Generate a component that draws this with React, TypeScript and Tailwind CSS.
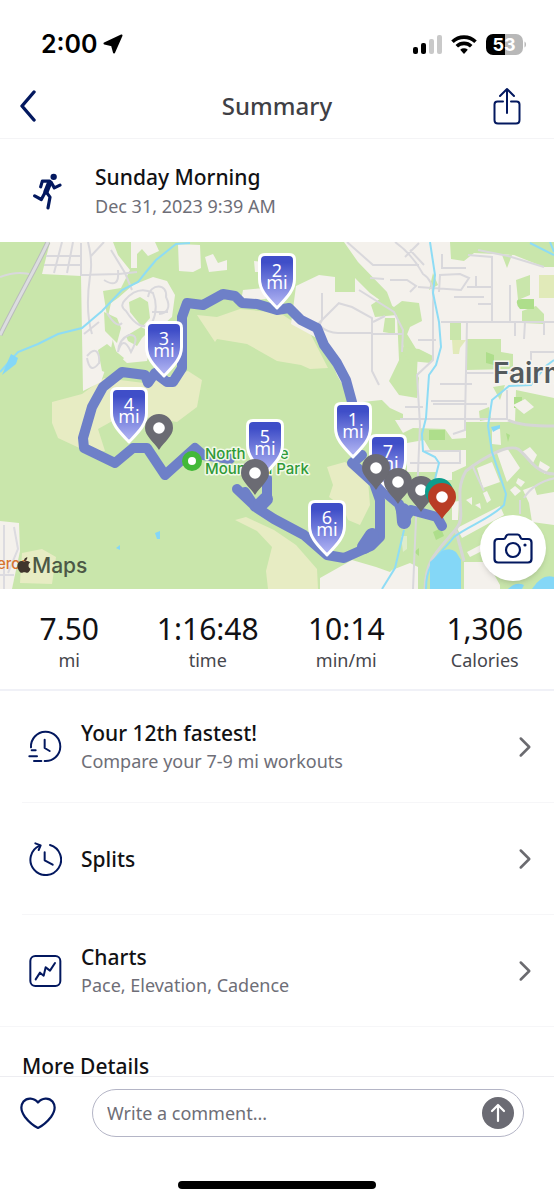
import React, { useState } from 'react';
import { ChevronRight } from 'lucide-react';
import { FaApple } from 'react-icons/fa';

interface MapPoint {
  label: string;
  x: number;
  y: number;
}

// Later entries are painted over earlier ones
const MILE_MARKERS: MapPoint[] = [
  { label: '7', x: 388, y: 434 },
  { label: '6', x: 327, y: 500 },
  { label: '5', x: 265, y: 419 },
  { label: '4', x: 129, y: 387 },
  { label: '3', x: 164, y: 321 },
  { label: '2', x: 277, y: 253 },
  { label: '1', x: 353, y: 402 },
];

const PINS = [
  { x: 159, y: 428, color: '#6b6b73' },
  { x: 255, y: 473, color: '#6b6b73' },
  { x: 421, y: 490, color: '#6b6b73' },
  { x: 398, y: 482, color: '#6b6b73' },
  { x: 376, y: 468, color: '#6b6b73' },
  { x: 439, y: 492, color: '#0d9c8c' },
  { x: 442, y: 497, color: '#b93d25' },
];

const STATS = [
  { value: '7.50', unit: 'mi' },
  { value: '1:16:48', unit: 'time' },
  { value: '10:14', unit: 'min/mi' },
  { value: '1,306', unit: 'Calories' },
];

const FastestIcon = () => (
  <svg viewBox="0 0 102 102" className="size-[34px]" fill="none" stroke="currentColor" strokeWidth="6" strokeLinecap="round" strokeLinejoin="round">
    <path d="M9 52A44 44 0 1 1 50 93" />
    <path d="M50 29v25l15 9M11 61h12M4 79h23M18 93h22" />
  </svg>
);

const SplitsIcon = () => (
  <svg viewBox="0 0 102 102" className="size-[34px]" fill="none" stroke="currentColor" strokeWidth="6" strokeLinecap="round" strokeLinejoin="round">
    <path d="M66 9A46 46 0 1 1 35 11" />
    <path d="M22 4l16 6-6 14M50 31v24l24 13" />
  </svg>
);

const ChartsIcon = () => (
  <svg viewBox="-1 0 102 102" className="size-[34px]" fill="none" stroke="currentColor" strokeWidth="6" strokeLinecap="round" strokeLinejoin="round">
    <rect x="6" y="6" width="90" height="90" rx="15" />
    <path d="M22 76l13-20 11 9 6-25 13 10 15-23" />
  </svg>
);

const ROWS = [
  { title: 'Your 12th fastest!', subtitle: 'Compare your 7-9 mi workouts', icon: <FastestIcon /> },
  { title: 'Splits', subtitle: '', icon: <SplitsIcon /> },
  { title: 'Charts', subtitle: 'Pace, Elevation, Cadence', icon: <ChartsIcon /> },
];

const StatusBar = () => (
  <div className="flex items-center justify-between pl-[41px] pr-[28px] pt-7">
    <div className="flex items-center gap-[5px]">
      <span className="font-['Inter'] text-[25px] leading-8 font-semibold text-black">2:00</span>
      <svg viewBox="0 0 20 20" className="size-5" fill="#000" stroke="#000" strokeWidth="2" strokeLinejoin="round">
        <path d="M18.500 1.500L1.500 9.500l7.500 1.700 2 7.300z" />
      </svg>
    </div>
    <div className="flex items-center gap-[9px]">
      <svg viewBox="0 0 30 19" className="h-[19px] w-[30px]">
        <rect x="1" y="12" width="5" height="7" rx="2" />
        <rect x="9" y="8" width="5" height="11" rx="2" />
        <rect x="17" y="4" width="5" height="15" rx="2" fill="#c9c9c9" />
        <rect x="25" y="0" width="5" height="19" rx="2" fill="#c9c9c9" />
      </svg>
      <svg viewBox="0 0 26 19" className="h-[19px] w-[26px]" fill="none" stroke="#000" strokeWidth="3.600">
        <path d="M1.500 6.800a16.500 16.500 0 0 1 23 0" />
        <path d="M5.800 11.300a10.300 10.300 0 0 1 14.400 0" />
        <path d="M13 19l-3.800-4.200a5.600 5.600 0 0 1 7.600 0z" fill="#000" stroke="none" />
      </svg>
      <svg viewBox="0 0 40 21" className="h-[21px] w-10">
        <path d="M7 0h12v21H7a7 7 0 0 1-7-7V7a7 7 0 0 1 7-7z" />
        <path d="M19 0h11a7 7 0 0 1 7 7v7a7 7 0 0 1-7 7H19z" fill="#b8b8b8" />
        <path d="M38.500 7.500c2 1 2 5 0 6z" fill="#b8b8b8" />
        <text x="18" y="17" textAnchor="middle" fill="#fff" className="font-['Inter'] text-[18px] font-bold">53</text>
      </svg>
    </div>
  </div>
);

const MileMarker = ({ label, x, y }: MapPoint) => (
  <g transform={`translate(${x} ${y})`}>
    <path
      d="M-12 1.500h24q5.500 0 5.500 5.500v19c0 12-9 20-17.500 29-8.500-9-17.500-17-17.500-29V7q0-5.500 5.500-5.500z"
      fill="url(#marker)"
      stroke="#fff"
      strokeWidth="3"
      strokeLinejoin="round"
    />
    <text y="24" textAnchor="middle" fill="#fff" className="text-[18px]">{label}</text>
    <text y="36" textAnchor="middle" fill="#fff" className="text-[18px]">mi</text>
  </g>
);

const RouteMap = () => (
  <svg viewBox="0 242 554 347" className="block w-full" role="img" aria-label="Route map">
    <defs>
      <linearGradient id="marker" x1="0" y1="0" x2="0" y2="1">
        <stop offset="0.150" stopColor="#3f4ec8" />
        <stop offset="0.900" stopColor="#a9adf0" />
      </linearGradient>
    </defs>
    <rect y="242" width="554" height="347" fill="#c9e6ab" />

    {/* Meadows */}
    <g fill="#e7ecc3">
      <path d="M52 402l30-8 22-16 40 5 44-12 14 9-5 27-20 15-52-8-27 15 7 22-17 1-30-14-6-15z" />
      <path d="M197 315l20 2 23-8 40 4 30 20 18 35-18 1-9-4-24-4-30-17-30-5-2 3z" />
      <path d="M327 467l18-5 23 18 2 25-10 20-12-5-5-13-14-10 4-12z" />
      <path d="M235 520l11-3 28 13 22 15 21 24 1 20h-50l-2-18 6-24-15-16z" />
      <path d="M22 553l20-4 14 8-4 27-32-1z" />
    </g>

    {/* Built-up areas */}
    <g fill="#f4f1ec">
      <path d="M50 242h63l5 13 12 15-9 18-18 3 4 25 7 18-5 24-8 24-18 9-2-115-39-2z" />
      <path d="M118 298l15-13 20-8 14 4 8 14-3 22-14 12-7 14-4 18-20 2-10-9-10-33 4-18z" />
      <path d="M131 242h24l4 9-11 5-6-7-5 5v14h-6zM178 244l22 1 1 23-8 4-14-1zM205 257l8-3 5 9 9-3v10l-18 2zM243 290l20-2 3 11-25 2zM254 261l10 1v10h-9z" />
      <path d="M0 521l19 2 1 28-8 38H0z" />
      <path d="M344 242h210v180H403v-8l-13-6-9-9 15-7 20-2 2-38-22-36-9-24-29-30z" />
      <path d="M296 286l23-11 16 2v15h20v-14l15 15 21 15 11 16 2 36 2 25-15 14-38 4-16-28-13-33-33-18z" />
    </g>

    {/* Green patches inside the town */}
    <g fill="#c9e6ab">
      <path d="M129 302l11-5 8 5 2 16-8 9-12-15zM104 312l13 6 4 10-4 15-12-12zM126 336l15-9 8 4-7 7-5 8-9-5zM98 350l9-6 17 14-14 16-8-3z" />
      <path d="M371 305l9-6 14 8 8-6 17 2 3 18-12 6-8 20 17 2 14 7-2 7-32-3-2-45-22 2zM385 318h10v16l-12-2z" />
      <path d="M450 242h104v25h-10l-30-12-40-2-10 8-13-2zM502 255h10l-5 13zM516 280l14-5v20l-12 5zM450 323h11v17h-11zM467 339h34v13l12 2v15l-46 1zM516 390l38 8v24h-39zM493 387l12-2-5 15zM479 411l10-4 2 12-11 2z" />
      <path d="M522 311l14-5 8 8v10l-22-1zM433 273l5 12-9 5zM403 352l8 12 8 14-2 20-18-3-10-14z" />
    </g>
    <g fill="#e1eab9">
      <path d="M539 275h15v23h-15zM452 340h14l-6 8-1 6h-6z" />
    </g>
    <path d="M517 301q0-2 5-2h12v10h-14q-4-4-3-8zM429 430h16v10h-16zM486 352l8 3v10l-8-2zM514 397h8v11h-8zM506 433l4 2-2 7zM433 532l8-4 3 8-8 4zM414 552l5-4v8z" fill="#aede8b" />

    {/* Blocks east of the creek */}
    <g fill="#f4f1ec">
      <path d="M395 420h71v18l-14 1-7-10-32-1-10 5zM407 443l17-3 6 10h36v16l-13 6h-46zM513 405l12-6 9 8-10 7z" />
      <path d="M477 468l15-6 8 20-17 6zM497 453l10-5 13 20-13 14zM492 430l8-1 1 16-9-1zM522 452l8-5 7 8-5 10zM540 461l10 6-5 7-7-5zM518 478l7 4-4 5-5-4zM510 490l5-4 6 5-6 5zM466 500l6-3v8zM475 505l5-2 1 6zM483 493l4-2 4 9-4 3z" />
      <path d="M457 528l43-22 4 9-42 23zM467 552l23-12v7l-20 10zM523 490l11-4 3 9 17-3v33l-22-3-3-19zM464 562h23l13 23v4h-36zM452 502l7-1-1 19h-6zM436 472h16v8h-16z" />
      <path d="M320 578l32-18 24 7 14 5 2-2 18-7 8 4v22h-98z" />
      <path d="M403 552l4-3v-13h-6z" opacity="0.500" />
    </g>

    {/* Roads */}
    <g fill="none" stroke="#d9d8dc" strokeWidth="2">
      <path d="M0 277q18-7 33-2M62 242l-8 31M73 242l-6 31M46 256h35M44 265h38M81 243v32l38-1 18-2M88 242q5 20 2 34-5 35 2 58M104 242l-13 14M111 250l14 23 7 17M125 300q13-15 28-7 6 15-1 30-12 10-26-12-7-5-1-11" />
      <path d="M148 297c2-14 20-14 18 0 6 12 0 16-7 17M152 312h16M104 280q16 10 14-10M84 334l15-12M87 356c10-12 13-1 12 8M87 358q3 17 12 5M118 352q5-18 13 0 10-18-2-17-10 4-11 17M107 313q10 16 15 10" />
      <path d="M347 242l26 23h46M395 242q17 12 28 32 12 7 10 29v57l-16 15 3 50-7 164M405 257l14-14M410 250l14 15M390 280h17l9 6-6 6M418 287l43 3 8-12-9-4-20 1-1 17M442 254v14h24M454 297h30" />
      <path d="M338 303l14 4 20 11v53l7 14M373 334h29M339 303l-22 22M320 326q8 7 18 7h34M322 293v27l-5 10M373 322l12-6M384 279l-14-1M418 340h18M359 290l35 22 9 18-1 22" />
      <path d="M468 255l24 2 0 64M478 250l30 6 36 11M510 285v37M441 322h113M467 287h25M476 276v10M467 322l-2 98M440 384h32M467 373h51M466 401h-35M400 419h108M433 404h54M515 322v14M525 322l-1 17M544 322v13M507 390v30M531 362v-10h23M478 304h14" />
      <path d="M425 451h35v12h-50M405 407h18M465 420v10l-12 4" />
      <path d="M472 465l12 26M556 478q-22 4-32 20M520 500v14" />
    </g>
    <g fill="none" stroke="#d6d6d6" strokeWidth="3">
      <path d="M508 420q12 6 46 6M554 474c-18 0-26-18-36-25-10-5-34 8-52 22-14 24 2 44-10 58-20 24-30 30-31 60M456 531l8 30" />
    </g>
    <g fill="none">
      <path d="M48 242C40 260 20 295 0 335" stroke="#b9bcbb" strokeWidth="5" />
      <path d="M48 242C40 260 20 295 0 335" stroke="#dcdde0" strokeWidth="3" />
      <path d="M4 525v64M14 527l4 22-10 24M0 575h14" stroke="#dcdbe0" strokeWidth="2" />
    </g>

    {/* Creeks and ponds */}
    <g fill="none" stroke="#8edcf5" strokeWidth="2">
      <path d="M190 243l-14 1-20 16-10 12-8 10-16 8-20 21-20 17-24 6-20 10-20 8-18 20" />
      <path d="M430 242l5 33-2 18 6 29 2 25-5 18-7 10-3 43-4 16 1 17 12 6 4 6-4 16v10" />
      <path d="M554 360l-8 6-15 19-22 1-17 14-4 26 4 26 14 42-2 11c-14 14-36 21-50 32-14 18-28 24-28 52M404 530l-9 38-13 21M530 243l24 12M550 242l4 10" />
    </g>
    <g fill="#84d7f7">
      <path d="M11 354l7 4-2 6-14 11 5-12zM155 533l5-2v8h-3zM116 548l4-3v5zM491 427l9-2v3l-7 4z" />
      <path d="M430 562q8-7 12-11 8-4 14 1l5 8v29h-31zM508 589q8-8 16-4l-2 4zM532 589q10-16 22-12v12z" />
    </g>

    {/* Run route */}
    <g fill="none" stroke="#6e80c8" strokeWidth="10" strokeLinecap="round" strokeLinejoin="round">
      <path d="M354 452l-2-50-6-22-9-17-13-18-7-17-16-8-12-12-12 2-20-6-15-1-7-7-12-2-20 11-16-2-5 14v51l-9 14h-6l-12-9-7 10-3-8-23-3-19 15-11 20-9 31 1 10 31 15 18-15h14l10 15 8 12 30-27 8 7 27 4" />
      <path d="M237 489l20 19 17 11 30 16 23 20 17 3 27-12 9-9v-37l-6-17-22-20 10-8M267 478v22l-12 7-10-15" />
      <path d="M375 484l24 20 5 16 7-10 26 7 5 9" />
      <path d="M372 535l-8 12M260 505l6-6" strokeWidth="14" />
      <path d="M403 510l1 12" strokeWidth="14" />
    </g>

    {/* Labels */}
    <circle cx="192" cy="461" r="7" fill="#fff" stroke="#42b938" strokeWidth="6" />
    <g fill="#2f9a37" stroke="#f2f9e8" strokeWidth="3" strokeLinejoin="round" paintOrder="stroke" className="font-['Inter'] text-[15px] font-medium">
      <text x="205" y="459">North Table</text>
      <text x="205" y="474">Mountain Park</text>
    </g>
    <text x="493" y="383" fill="#545a5d" stroke="#f6f4f0" strokeWidth="3" paintOrder="stroke" className="font-['Inter'] text-[28px] font-semibold">Fairm</text>
    <text x="-3" y="569" fill="#d8742f" className="font-['Inter'] text-[15px] font-medium">erco</text>
    <FaApple x="15" y="556" size="18" color="#40352c" />
    <text x="32" y="573" fill="#4c5846" className="font-['Inter'] text-[21px] font-medium">Maps</text>

    {MILE_MARKERS.map((marker) => (
      <MileMarker key={marker.label} {...marker} />
    ))}
    {PINS.map((pin) => (
      <g key={pin.x} transform={`translate(${pin.x} ${pin.y})`}>
        <path d="M0 22C-5 14-14 8-14 0a14 14 0 0 1 28 0c0 8-9 14-14 22z" fill={pin.color} />
        <circle r="5.800" fill="#fff" />
      </g>
    ))}
  </svg>
);

const App: React.FC = () => {
  const [comment, setComment] = useState('');

  return (
    <div className="min-h-screen bg-white font-['Noto_Sans',sans-serif] text-[#111114]">
      <StatusBar />

      {/* Header */}
      <header className="grid h-[79px] grid-cols-[1fr_auto_1fr] items-center border-b border-[#f4f4f6] pt-[14px] text-[#03185f]">
        <button aria-label="Back" className="ml-5 justify-self-start">
          <svg viewBox="0 0 16 32" className="h-8 w-4" fill="none" stroke="currentColor" strokeWidth="3.400" strokeLinecap="round" strokeLinejoin="round">
            <path d="M14 2L2 16l12 14" />
          </svg>
        </button>
        <h1 className="text-[24px] leading-8 font-medium text-[#3f4045]">Summary</h1>
        <button aria-label="Share" className="mr-[33px] justify-self-end">
          <svg viewBox="0 0 28 38" className="h-[38px] w-7" fill="none" stroke="currentColor" strokeWidth="2" strokeLinecap="round" strokeLinejoin="round">
            <path d="M10 14.500H4.500Q1.500 14.500 1.500 17.500v15.500q0 3.500 3.500 3.500h18q3.500 0 3.500-3.500V17.500q0-3-3-3H18M14 26V2M7 9l7-7 7 7" />
          </svg>
        </button>
      </header>

      <section className="flex h-[103px] items-center pt-[2px] pl-[32px]">
        <svg viewBox="0 0 90 110" className="h-[37px] w-[30px] text-[#03185f]" fill="none" stroke="currentColor" strokeWidth="9.500" strokeLinecap="round" strokeLinejoin="round">
          <circle cx="65" cy="11" r="9.500" fill="currentColor" stroke="none" />
          <path d="M26 41l5-17 22 0M57 27l10 17 17-8M43 57l11 15-6 32M38 60L28 79 8 68" />
          <path d="M52 31L42 56" strokeWidth="16" />
        </svg>
        <div className="ml-[33px]">
          <h2 className="text-[21px] leading-[29px] font-medium">Sunday Morning</h2>
          <p className="text-[18px] leading-[29px] text-[#6e6e77]">Dec 31, 2023 9:39 AM</p>
        </div>
      </section>

      <div className="relative">
        <RouteMap />
        <button aria-label="Add photo" className="absolute right-2 bottom-2 flex size-[66px] items-center justify-center rounded-full bg-white text-[#03185f] shadow-md">
          <svg viewBox="0 0 40 31" className="h-[31px] w-10" fill="none" stroke="currentColor" strokeWidth="2.200" strokeLinejoin="round">
            <path d="M5 6h5.500q1.500 0 2-1.500l.8-1.700Q14 1.500 15.500 1.500h9q1.500 0 2.200 1.300l.8 1.700q.5 1.500 2 1.500H35q3.500 0 3.500 3.500v16.500q0 3.500-3.500 3.500H5q-3.500 0-3.500-3.500V9.500Q1.500 6 5 6z" />
            <circle cx="20" cy="17" r="7" />
            <circle cx="32" cy="12" r="1.600" fill="currentColor" stroke="none" />
          </svg>
        </button>
      </div>

      {/* Totals */}
      <dl className="grid grid-cols-4 border-b-2 border-[#f0f1f7] pt-5 pb-[17px] text-center">
        {STATS.map((stat) => (
          <div key={stat.unit} className="flex flex-col-reverse">
            <dt className="text-[18px] leading-6 text-[#45464c]">{stat.unit}</dt>
            <dd className="text-[30px] leading-[39px]">{stat.value}</dd>
          </div>
        ))}
      </dl>

      <ul>
        {ROWS.map((row) => (
          <li key={row.title} className="ml-[22px] border-b border-[#f6f6f8] last:ml-0 last:pl-[22px]">
            <button className="flex h-[111px] w-full items-center pr-3 pl-[6px] text-left">
              <span className="w-[53px] text-[#03185f]">{row.icon}</span>
              <span className="flex-1">
                <span className="block text-[21px] leading-7 font-medium">{row.title}</span>
                {row.subtitle && <span className="block text-[18px] leading-7 text-[#6e6e77]">{row.subtitle}</span>}
              </span>
              <ChevronRight size={34} strokeWidth={1.8} className="text-[#6b6b70]" />
            </button>
          </li>
        ))}
      </ul>

      <section className="h-[49px] overflow-hidden px-[22px] pt-[25px]">
        <h2 className="text-[21px] leading-7 font-medium">More Details</h2>
      </section>

      {/* Comment bar */}
      <footer className="sticky bottom-0 border-t border-[#ededf1] bg-white pt-3 pb-2">
        <div className="flex items-center pr-[30px] pl-5">
          <button aria-label="Like" className="text-[#03185f]">
            <svg viewBox="0 0 36 32" className="h-8 w-9" fill="none" stroke="currentColor" strokeWidth="2.200" strokeLinejoin="round">
              <path d="M18 5.500C22 .5 29 .3 32.500 4.500 36 9 34.500 15 31 20c-3.500 4.500-8 8.500-13 11C13 28.500 8.500 24.500 5 20 1.500 15 0 9 3.500 4.500 7 .3 14 .5 18 5.500z" />
            </svg>
          </button>
          <div className="ml-9 flex h-12 flex-1 items-center rounded-full border border-[#b4b5c6] pr-[9px] pl-[14px]">
            <input
              type="text"
              aria-label="Write a comment"
              placeholder="Write a comment..."
              value={comment}
              onChange={(e) => setComment(e.target.value)}
              className="min-w-0 flex-1 bg-transparent text-[18px] leading-6 outline-none placeholder:text-[#6e6e77]"
            />
            <button aria-label="Send" className="flex size-8 items-center justify-center rounded-full bg-[#6b6b73]">
              <svg viewBox="0 0 16 20" className="h-5 w-4" fill="none" stroke="#fff" strokeWidth="2.200" strokeLinecap="round" strokeLinejoin="round">
                <path d="M8 18V2M2 8l6-6 6 6" />
              </svg>
            </button>
          </div>
        </div>
        <div className="mx-auto mt-11 h-2 w-[198px] rounded-full bg-black" />
      </footer>
    </div>
  );
};

export default App;
